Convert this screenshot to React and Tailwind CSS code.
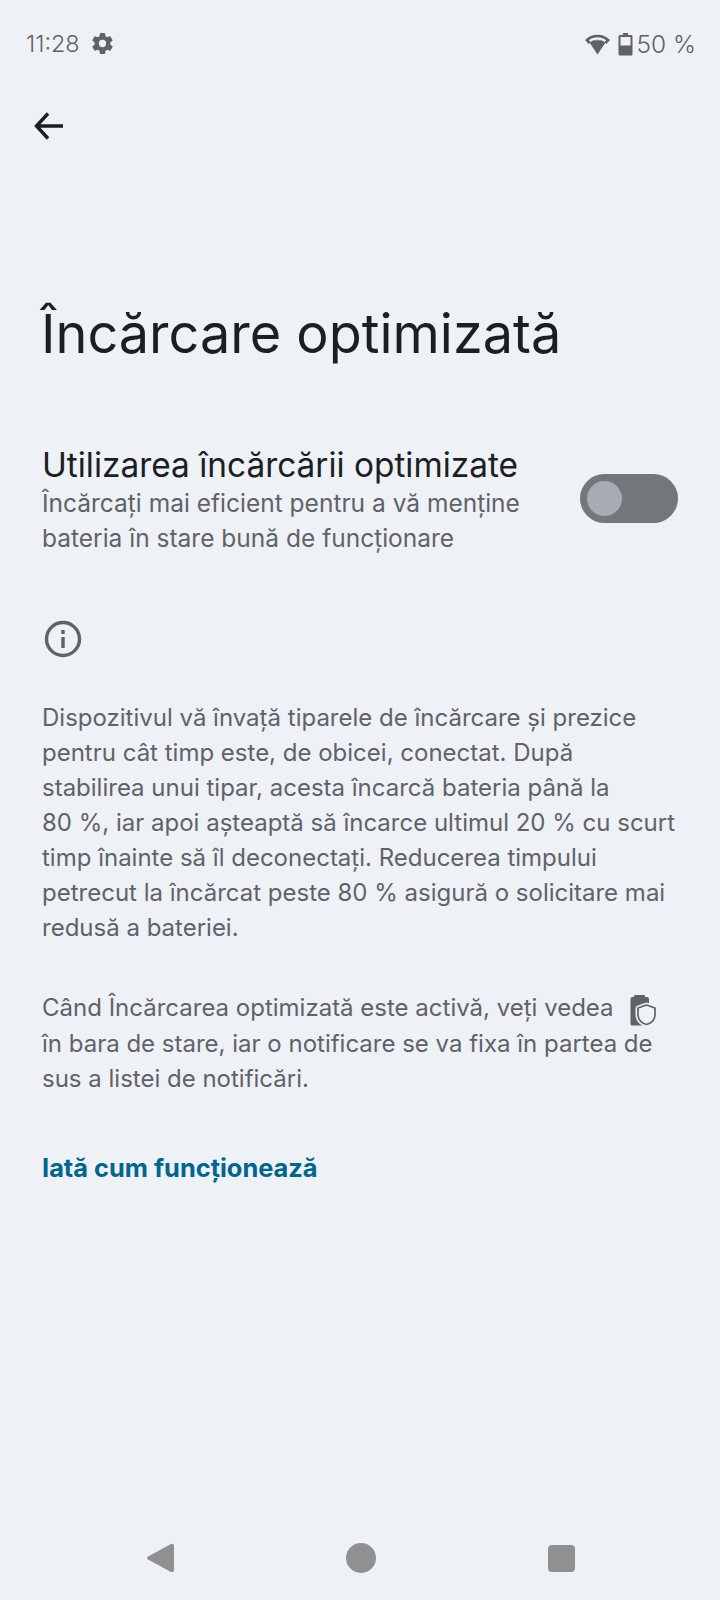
import React from "react"

const FONT = "font-['Inter','Liberation_Sans',sans-serif]"

function Gear() {
  return (
    <svg width="25" height="25" viewBox="0 0 24 24" fill="#5f6368">
      <path d="M19.4 13c.04-.32.1-.66.1-1s-.06-.68-.1-1l2.1-1.65c.2-.15.25-.42.12-.64l-2-3.46c-.12-.22-.39-.3-.61-.22l-2.49 1c-.52-.4-1.08-.73-1.69-.98l-.38-2.65A.49.49 0 0 0 14 2h-4c-.25 0-.46.18-.49.42l-.38 2.65c-.61.25-1.17.59-1.69.98l-2.49-1a.5.5 0 0 0-.61.22l-2 3.46c-.13.22-.07.49.12.64L4.57 11c-.04.32-.07.66-.07 1s.03.68.07 1l-2.11 1.65c-.19.15-.25.42-.12.64l2 3.46c.12.22.39.3.61.22l2.49-1c.52.4 1.08.73 1.69.98l.38 2.65c.03.24.24.42.49.42h4c.25 0 .46-.18.49-.42l.38-2.65c.61-.25 1.17-.59 1.69-.98l2.49 1c.23.09.49 0 .61-.22l2-3.46c.12-.22.07-.49-.12-.64L19.4 13zM12 15.5a3.5 3.5 0 1 1 0-7 3.5 3.5 0 0 1 0 7z" />
    </svg>
  )
}

function Wifi() {
  return (
    <svg width="27" height="24" viewBox="0 0 26 24" fill="none">
      <path d="M13 22.5 L5 10.5 C9.5 7.5 16.5 7.5 21 10.5 Z" fill="#5f6368" />
      <path d="M.5 8 C7 1 19 1 25.5 8 L21.8 12 C17 7 9 7 4.2 12 Z" fill="#5f6368" />
      <path d="M4.5 8.2 C9.5 4.4 16.5 4.4 21.5 8.2 L20.2 10 C16 7 10 7 5.8 10 Z" fill="#eef1f6" />
    </svg>
  )
}

function Battery() {
  return (
    <svg width="15" height="24" viewBox="0 0 15 24">
      <path d="M5 1h5V3h3a1.5 1.5 0 0 1 1.5 1.5V22a1.5 1.5 0 0 1-1.5 1.5H2A1.5 1.5 0 0 1 .5 22V4.5A1.5 1.5 0 0 1 2 3h3z" fill="#5f6368" />
      <rect x="2.5" y="5" width="10" height="8.5" fill="#eef1f6" />
    </svg>
  )
}

function BatteryShield() {
  const shield = "M16.5 11 L8 14 V20.5 C8 25.5 11.5 29 16.5 30.5 C21.5 29 25 25.5 25 20.5 V14 Z"
  return (
    <svg width="26" height="32" viewBox="0 0 26 32">
      <path d="M5 1h9a1 1 0 0 1 1 1V3h2a2 2 0 0 1 2 2V30a1.5 1.5 0 0 1-1.5 1.5H2A1.5 1.5 0 0 1 .5 30V5a2 2 0 0 1 2-2H4V2a1 1 0 0 1 1-1z" fill="#5f6368" />
      <path d={shield} fill="#eef1f6" stroke="#eef1f6" strokeWidth="5" strokeLinejoin="round" />
      <path d={shield} fill="#eef1f6" stroke="#5f6368" strokeWidth="1.7" strokeLinejoin="round" />
    </svg>
  )
}

export default function App() {
  return (
    <div className={`w-[720px] h-[1600px] bg-[#eef1f6] flex flex-col ${FONT}`}>
      <div className="h-[88px] pl-[26px] pr-[24px] flex items-center justify-between text-[23.4px] text-[#5f6368] font-light">
        <div className="flex items-center gap-[10px]">
          <span>11:28</span>
          <Gear />
        </div>
        <div className="flex items-center">
          <Wifi />
          <span className="w-[7px]" />
          <Battery />
          <span className="ml-[3px] text-[24.5px]">50 %</span>
        </div>
      </div>

      <div className="h-[76px] pl-[33px] flex items-center">
        <svg width="32" height="32" viewBox="0 0 32 32" fill="none" stroke="#1b1f23" strokeWidth="3.4">
          <path d="M30 16H4M15 3.5 3.5 16 15 28.5" />
        </svg>
      </div>

      <h1 className="mt-[138px] pl-[41px] text-[54px] leading-[64px] font-normal text-[#1b1f23]">Încărcare optimizată</h1>

      <div className="mt-[78px] pl-[42px] pr-[42px] flex items-center justify-between">
        <div className="w-[520px]">
          <div className="text-[33.4px] leading-[42px] text-[#1b1f23]">Utilizarea încărcării optimizate</div>
          <div className="text-[24.5px] leading-[35px] text-[#5f6368]">
            Încărcați mai eficient pentru a vă menține<br />bateria în stare bună de funcționare
          </div>
        </div>
        <div className="w-[98px] h-[49px] rounded-full bg-[#72777c] flex items-center pl-[7px] mb-[3px]">
          <div className="w-[35px] h-[35px] rounded-full bg-[#a7acb3]" />
        </div>
      </div>

      <div className="mt-[64px] pl-[44px]">
        <svg width="38" height="38" viewBox="0 0 38 38" fill="none" stroke="#5f6368" strokeWidth="3.4">
          <circle cx="19" cy="19" r="16.5" />
          <path d="M19 17v11" />
          <path d="M19 10v4" />
        </svg>
      </div>

      <p className="mt-[42px] pl-[42px] text-[24px] leading-[35px] text-[#5f6368]">
        Dispozitivul vă învață tiparele de încărcare și prezice<br />
        pentru cât timp este, de obicei, conectat. După<br />
        stabilirea unui tipar, acesta încarcă bateria până la<br />
        80 %, iar apoi așteaptă să încarce ultimul 20 % cu scurt<br />
        timp înainte să îl deconectați. Reducerea timpului<br />
        petrecut la încărcat peste 80 % asigură o solicitare mai<br />
        redusă a bateriei.
      </p>

      <p className="mt-[45px] pl-[42px] text-[24px] leading-[35px] text-[#5f6368]">
        Când Încărcarea optimizată este activă, veți vedea
        <span className="inline-block align-[-10px] ml-[16px]"><BatteryShield /></span><br />
        în bara de stare, iar o notificare se va fixa în partea de<br />
        sus a listei de notificări.
      </p>

      <div className="mt-[54px] pl-[42px] text-[25.4px] leading-[35px] font-bold text-[#00658f]">Iată cum funcționează</div>

      <div className="mt-auto h-[88px] flex items-center justify-center">
        <div className="flex items-center gap-[172px] ml-[0px] mt-[4px]">
          <svg width="28" height="30" viewBox="0 0 28 30" fill="#8e9092">
            <path d="M25 1 C26.5 .5 28 1.5 28 3 V27 C28 28.5 26.5 29.5 25 29 L2 16.5 C.8 15.8 .8 14.2 2 13.5 Z" />
          </svg>
          <div className="w-[30px] h-[30px] rounded-full bg-[#8e9092]" />
          <div className="w-[27px] h-[27px] rounded-[4px] bg-[#8e9092]" />
        </div>
      </div>
    </div>
  )
}
